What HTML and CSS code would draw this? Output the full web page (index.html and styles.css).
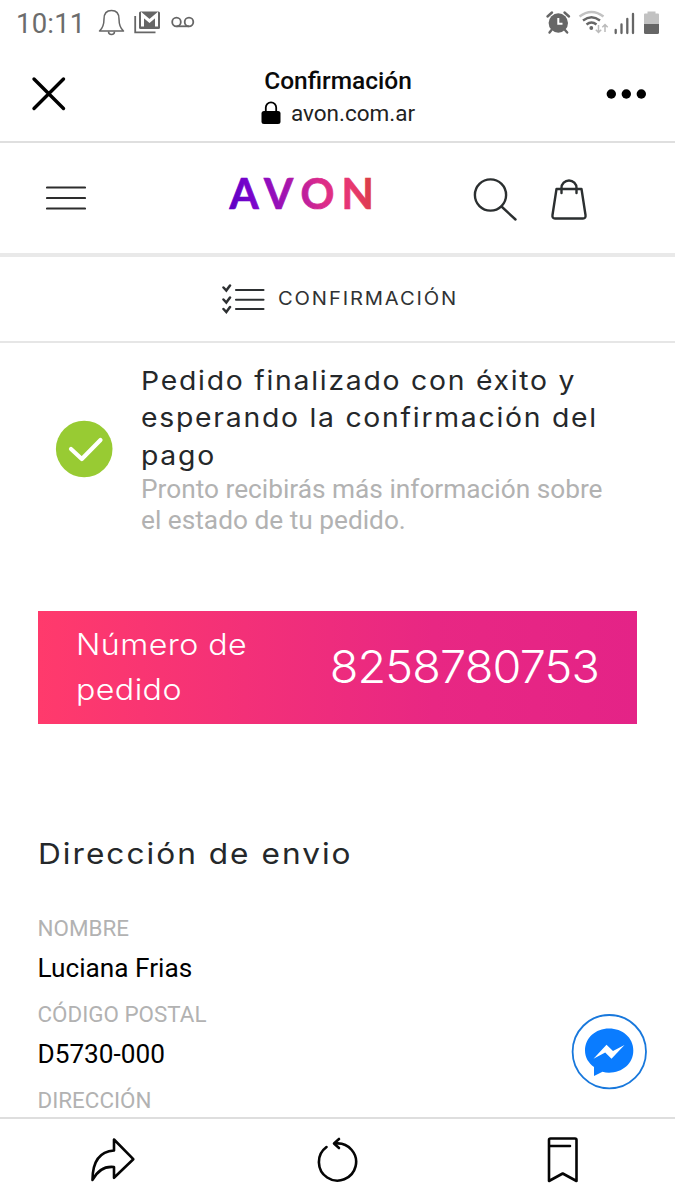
FILE: index.html
```html
<!DOCTYPE html>
<html lang="es">
<head>
<meta charset="utf-8">
<title>Confirmación</title>
<link rel="stylesheet" href="styles.css">
</head>
<body>
<div class="screen">
  <header class="status">
    <span class="clock">10:11</span>
    <svg class="status-left" width="98" height="30" viewBox="98 8 98 30" fill="none" stroke="#666">
      <path d="M99.500 31C103 28 104 25 104 19C104 13.500 107 10.500 111.500 10.500S119 13.500 119 19C119 25 120 28 123.500 31Z" stroke-width="1.500" stroke-linejoin="round"/>
      <path d="M108.500 31.500a3 3 0 0 0 6 0" stroke-width="1.500"/>
      <path d="M135.200 16V32.300H155.500" stroke-width="1.800"/>
      <rect x="139" y="11.500" width="21" height="17.500" rx="1.500" fill="#666" stroke="none"/>
      <path d="M142.500 26.500V15L149.500 21L156.500 15V26.500" stroke="#fff" stroke-width="3"/>
      <circle cx="176.500" cy="22" r="4.300" stroke-width="1.800"/>
      <circle cx="189" cy="22" r="4.300" stroke-width="1.800"/>
      <path d="M176.500 26.300H189" stroke-width="1.800"/>
    </svg>
    <svg class="status-right" width="116" height="30" viewBox="545 8 116 30" fill="none" stroke="#666">
      <circle cx="558.300" cy="23" r="9.700" fill="#666" stroke="none"/>
      <path d="M547.500 16.500L552 12.500M569 16.500L564.500 12.500M551.500 30L549.500 32.500M565 30L567.200 32.500" stroke-width="2.400" stroke-linecap="round"/>
      <path d="M558.300 18V23.800H562.500" stroke="#fff" stroke-width="2"/>
      <path d="M579.500 16.500Q591.500 7.500 603.500 16.500" stroke="#c2c2c2" stroke-width="2.400"/>
      <path d="M583 20.500Q591.500 14 600 20.500M586.500 24.500Q591.500 20.500 596.500 24.500" stroke-width="2.400"/>
      <circle cx="591.300" cy="28" r="1.900" fill="#666" stroke="none"/>
      <path d="M598.500 25V32M595.800 29.800L598.500 32.500L601.200 29.800M605 32V25M602.300 27.200L605 24.500L607.700 27.200" stroke="#bbb" stroke-width="1.500"/>
      <path d="M615.700 30V33M621.500 24.500V33M627.300 19V33M633 14V33" stroke-width="2.300" stroke-linecap="round"/>
      <path d="M644 24V14.500Q644 13.500 645 13.500H647.500V11.500H655.500V13.500H658Q659 13.500 659 14.500V24Z" fill="#c2c2c2" stroke="none"/>
      <path d="M644 24H659V32.500Q659 34 657.500 34H645.500Q644 34 644 32.500Z" fill="#666" stroke="none"/>
    </svg>
  </header>

  <div class="browser">
    <svg width="36" height="36" viewBox="31 76 36 36" stroke="#000" stroke-width="3.400" stroke-linecap="round"><path d="M34 79L63.500 108.500M63.500 79L34 108.500"/></svg>
    <div class="page-id">
      <div class="page-name">Confirmación</div>
      <div class="page-host">
        <svg width="20" height="24" viewBox="0 0 20 24"><path d="M4.800 11V6.500a5.200 5.200 0 0 1 10.400 0V11" fill="none" stroke="#000" stroke-width="1.800"/><rect x="0.500" y="10" width="19" height="13" rx="2.500"/></svg>
        <span>avon.com.ar</span>
      </div>
    </div>
    <svg class="dots" width="42" height="12" viewBox="605 88 42 12"><circle cx="611.300" cy="94" r="4.700"/><circle cx="626.300" cy="94" r="4.700"/><circle cx="641.300" cy="94" r="4.700"/></svg>
  </div>

  <div class="site">
    <svg class="menu" width="40" height="26" viewBox="0 0 40 26" stroke="#2d2d2d" stroke-width="2.200" stroke-linecap="round"><path d="M1 2.500H39M1 13H39M1 23.500H39"/></svg>
    <svg class="logo" width="150" height="56" viewBox="0 0 150 56">
      <defs><linearGradient id="brand" gradientUnits="userSpaceOnUse" x1="3" y1="42" x2="146" y2="16"><stop offset="0" stop-color="#5b00c4"/><stop offset=".18" stop-color="#7b05cc"/><stop offset=".42" stop-color="#a616ad"/><stop offset=".65" stop-color="#dc2b8b"/><stop offset=".86" stop-color="#e8386f"/><stop offset="1" stop-color="#d94040"/></linearGradient></defs>
      <text class="wordmark" x="3.500 38 74.500 115.500" y="43" fill="url(#brand)" stroke="url(#brand)">AVON</text>
    </svg>
    <svg class="tools" width="116" height="46" viewBox="472 177 116 46" fill="none" stroke="#2b2f30" stroke-width="2.400" stroke-linecap="round">
      <circle cx="490.500" cy="195" r="15.600"/><path d="M501.500 206.500L515.500 219.500"/>
      <path d="M556.500 189H581.500L585.500 215Q586 218.500 583 218.500H555Q552 218.500 552.500 215Z" stroke-linejoin="round"/>
      <path d="M561.500 193V188A7.300 7.300 0 0 1 576.500 188V193"/>
    </svg>
  </div>

  <div class="step">
    <svg width="44" height="30" viewBox="221 284 44 30" fill="none" stroke="#2d3032" stroke-width="2.100" stroke-linecap="round"><path d="M236 290H263.500M236 299.700H263.500M236 309H263.500"/><path d="M223.500 287.500L226.300 290.500L230 285.500M223.500 299.500L226.300 302.500L230 297.500M223.500 309L226.300 312L230 307" stroke-width="2.500"/></svg>
    <span class="step-name">CONFIRMACIÓN</span>
  </div>

  <main>
    <section class="result">
      <svg width="58" height="58" viewBox="55 420 58 58"><circle cx="84.200" cy="449" r="28.300" fill="#98cb33"/><path d="M71 449L81.800 459L100.500 440" fill="none" stroke="#fff" stroke-width="4.200" stroke-linecap="round" stroke-linejoin="round"/></svg>
      <div>
        <h1>Pedido finalizado con éxito y<br>esperando la confirmación del<br>pago</h1>
        <p>Pronto recibirás más información sobre<br>el estado de tu pedido.</p>
      </div>
    </section>

    <section class="order">
      <div class="order-label">Número de<br>pedido</div>
      <div class="order-number">8258780753</div>
    </section>

    <section class="address">
      <h2>Dirección de envio</h2>
      <dl>
        <dt>NOMBRE</dt><dd>Luciana Frias</dd>
        <dt>CÓDIGO POSTAL</dt><dd>D5730-000</dd>
        <dt>DIRECCIÓN</dt>
      </dl>
    </section>
  </main>

  <svg class="chat" width="76" height="76" viewBox="571 1014 76 76">
    <circle cx="609.300" cy="1051.700" r="36.700" fill="#fff" stroke="#1878dc" stroke-width="1.800"/>
    <path d="M609 1028.500C595.500 1028.500 585 1038 585 1050.500C585 1057.500 588.500 1063 594 1067V1076L602.500 1071.800C604.500 1072.400 606.800 1072.700 609 1072.700C622.500 1072.700 633.300 1063.500 633.300 1050.500S622.500 1028.500 609 1028.500Z" fill="#0a7cff"/>
    <path d="M593.500 1058.800L606.500 1044.700L613 1051L624.500 1045L611.500 1058.800L605.200 1052.500Z" fill="#fff"/>
  </svg>

  <nav class="actions" aria-label="Acciones">
    <svg width="48" height="48" viewBox="89 1136 48 48"><path d="M114 1139.500L133.300 1159.200L114 1177.800V1167C105 1166 98 1169.500 92.500 1180C92.500 1163 99 1151.500 114 1150.500Z"/></svg>
    <svg width="48" height="48" viewBox="314.500 1136 48 48"><path d="M327 1147A18.600 18.600 0 1 0 336 1143.500"/><path d="M339.500 1139L334.500 1143.500L339.500 1148"/></svg>
    <svg width="48" height="48" viewBox="539 1136 48 48"><path d="M549 1181V1140Q549 1138.500 550.500 1138.500H575Q576.500 1138.500 576.500 1140V1181L562.700 1173.500ZM549 1146H570"/></svg>
  </nav>
</div>
</body>
</html>
```
FILE: styles.css
```css
* { box-sizing: border-box; }
body { margin: 0; background: #fff; font-family: Roboto, "Liberation Sans", sans-serif; }
svg { display: block; flex: none; }
.screen { position: relative; width: 675px; height: 1200px; overflow: hidden; display: flex; flex-direction: column; background: #fff; }
.status { height: 45px; flex: none; display: flex; align-items: flex-start; padding: 8px 14px 0 16px; color: #6c6c6c; }
.clock { width: 82px; font-size: 27.500px; line-height: 31px; letter-spacing: .2px; font-weight: 400; white-space: nowrap; }
.status-right { margin-left: auto; }
.browser { height: 98px; flex: none; display: flex; align-items: center; justify-content: space-between; padding: 2px 28px 0 31px; border-bottom: 2px solid #dfdfdf; }
.page-id { display: flex; flex-direction: column; align-items: center; margin-left: 4px; padding-top: 5px; }
.page-name { font-size: 24.500px; line-height: 32px; font-weight: 500; color: #0a0a0a; }
.page-host { display: flex; align-items: center; gap: 10px; font-size: 22.500px; line-height: 32px; color: #222; }
.site { height: 114px; flex: none; display: flex; align-items: center; padding-left: 46px; border-bottom: 4px solid #e9e9e9; }
.logo { margin: -8px 0 0 140px; }
.wordmark { font-family: Lato, sans-serif; font-weight: 700; font-size: 42px; stroke-width: .7px; }
.tools { margin-left: 96px; margin-top: 3px; }
.step { height: 86px; flex: none; display: flex; align-items: center; padding: 0 0 0 221px; gap: 13px; border-bottom: 2px solid #e6e6e6; }
/* Headings are set slightly extended, growing from their left edge. */
.step-name, h1, h2, .order-label { transform: scaleX(1.09); transform-origin: left; }
.step-name { font: 400 18.500px/24px Inter, sans-serif; letter-spacing: 1.700px; color: #303234; white-space: nowrap; margin-top: -2px; }
main { flex: 1; min-height: 0; overflow: hidden; padding: 18px 38px 0 37.500px; }
.result { display: flex; align-items: center; gap: 28px; padding-left: 17.500px; height: 176px; }
h1, h2, p, dl, dd { margin: 0; font-weight: 400; }
h1 { font: 400 26px/37.500px Inter, sans-serif; letter-spacing: 1.600px; color: #25282a; white-space: nowrap; }
.result p { font-size: 26.250px; line-height: 31px; color: #b2b2b2; white-space: nowrap; }
.order { margin-top: 74px; height: 113px; display: flex; align-items: center; justify-content: space-between; padding: 0 38px 2px; color: #fff; background: linear-gradient(90deg, #ff3a6c, #e82783 66%, #e42387); font-family: Inter, sans-serif; font-weight: 300; }
.order-label { font-size: 29.500px; line-height: 45px; letter-spacing: .4px; white-space: nowrap; }
.order-number { font-size: 45px; letter-spacing: -.8px; white-space: nowrap; transform: scaleX(1.04); transform-origin: right; }
.address h2 { margin-top: 108px; font: 400 29px/44px Inter, sans-serif; letter-spacing: 1.850px; color: #25282a; white-space: nowrap; }
dl { margin-top: 35px; }
dt { font-size: 22.400px; line-height: 35px; color: #b2b2b2; }
dd { font-size: 26.200px; line-height: 45px; margin-bottom: 6px; color: #000; }
.chat { position: absolute; left: 571px; top: 1014px; }
.actions { height: 83px; flex: none; display: grid; grid-template-columns: repeat(3, 1fr); justify-items: center; padding-top: 17px; border-top: 2px solid #dedede; }
.actions svg { fill: none; stroke: #050505; stroke-width: 2.600; stroke-linecap: round; stroke-linejoin: round; }
```
